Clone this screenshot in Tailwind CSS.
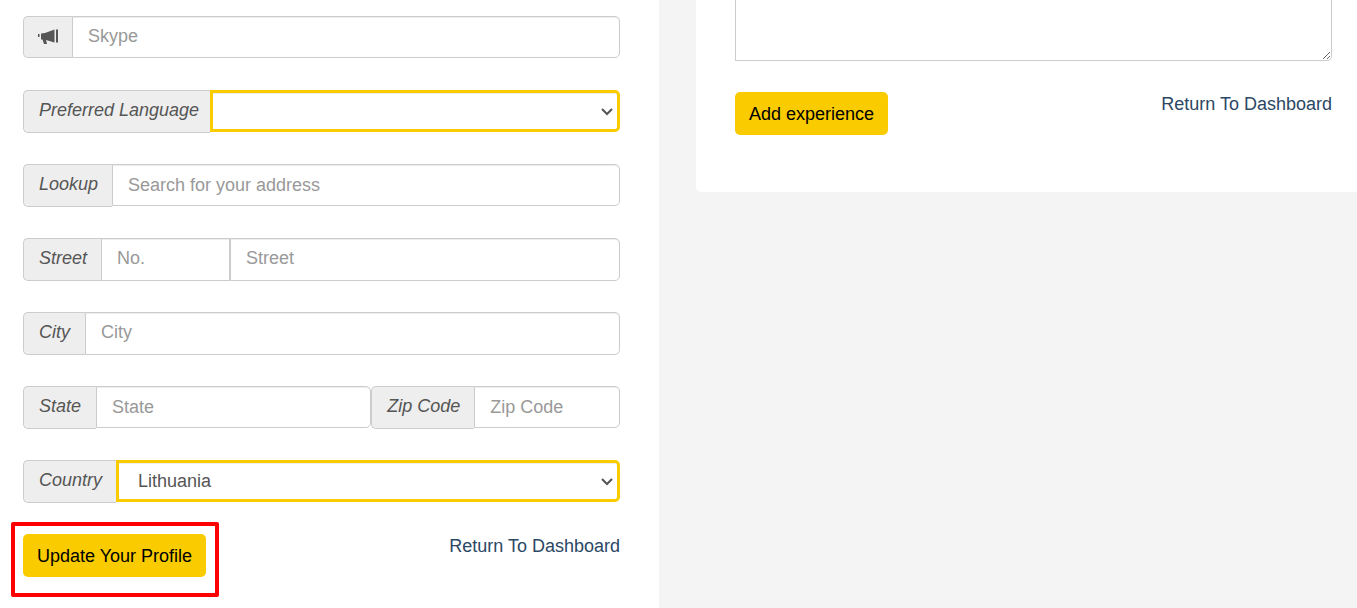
<!DOCTYPE html>
<html lang="en">
<head>
    <meta charset="UTF-8">
    <meta name="viewport" content="width=device-width, initial-scale=1.0">
    <title>Edit Profile</title>
    <script src="https://cdn.jsdelivr.net/npm/@tailwindcss/browser@4"></script>
</head>
<body class="min-h-screen bg-[#f4f4f4] font-['Liberation_Sans',Arial,sans-serif] text-[18px] leading-6 text-[#555]">
    <div class="grid min-h-screen grid-cols-[659fr_661fr] gap-[37px]">
        <!-- Profile form -->
        <form class="flex flex-col gap-[31px] bg-white pt-4 pr-[39px] pl-[23px]">
            <div class="flex h-[43px] items-start">
                <label for="skype" class="flex h-[42px] w-[49px] shrink-0 items-center justify-center rounded-l-[5px] border border-r-0 border-[#ccc] bg-[#eee]">
                    <svg class="h-[18px] w-[20px]" viewBox="0 0 20 18" fill="#555" role="img" aria-label="Skype">
                        <path d="M0 6h1.500v3H0zM3 5.500 7 5l9.500-3.500v13L8 12l1 4H6l-1.500-4.500H3zM18 1.500h2v13h-2z"/>
                    </svg>
                </label>
                <input id="skype" type="text" placeholder="Skype" class="h-[42px] min-w-0 flex-1 rounded-r-[5px] border border-[#ccc] bg-white px-[15px] pb-0.5 shadow-[inset_0_1px_1px_rgba(0,0,0,0.075)] placeholder:text-[#999]">
            </div>

            <div class="flex h-[43px] items-start">
                <label for="language" class="h-[43px] w-[187px] shrink-0 rounded-l-[5px] border border-r-0 border-[#ccc] bg-[#eee] pt-[7px] pl-[15px] whitespace-nowrap italic">Preferred Language</label>
                <div class="relative min-w-0 flex-1">
                    <select id="language" class="block h-[42px] w-full appearance-none rounded-r-[5px] border-3 border-[#facc00] bg-white px-[19px] shadow-[inset_0_1px_1px_rgba(0,0,0,0.075)]">
                        <option></option>
                        <option>English</option>
                        <option>Lithuanian</option>
                    </select>
                    <svg class="pointer-events-none absolute top-[18px] right-[7px] h-2 w-3" viewBox="0 0 12 8" fill="none" stroke="#555" stroke-width="2"><path d="M1 1l5 5 5-5"/></svg>
                </div>
            </div>

            <div class="flex h-[43px] items-start">
                <label for="lookup" class="h-[43px] w-[89px] shrink-0 rounded-l-[5px] border border-r-0 border-[#ccc] bg-[#eee] pt-[7px] pl-[15px] italic">Lookup</label>
                <input id="lookup" type="text" placeholder="Search for your address" class="h-[42px] min-w-0 flex-1 rounded-r-[5px] border border-[#ccc] bg-white px-[15px] shadow-[inset_0_1px_1px_rgba(0,0,0,0.075)] placeholder:text-[#999]">
            </div>

            <div class="flex h-[43px] items-start">
                <label for="street" class="h-[43px] w-[78px] shrink-0 rounded-l-[5px] border border-r-0 border-[#ccc] bg-[#eee] pt-[7px] pl-[15px] italic">Street</label>
                <input type="text" aria-label="Street number" placeholder="No." class="h-[43px] w-[129px] shrink-0 border border-[#ccc] bg-white px-[15px] pb-0.5 shadow-[inset_0_1px_1px_rgba(0,0,0,0.075)] placeholder:text-[#999]">
                <input id="street" type="text" placeholder="Street" class="h-[43px] min-w-0 flex-1 rounded-r-[5px] border border-[#ccc] bg-white px-[15px] pb-0.5 shadow-[inset_0_1px_1px_rgba(0,0,0,0.075)] placeholder:text-[#999]">
            </div>

            <div class="flex h-[43px] items-start">
                <label for="city" class="h-[43px] w-[62px] shrink-0 rounded-l-[5px] border border-r-0 border-[#ccc] bg-[#eee] pt-[7px] pl-[15px] italic">City</label>
                <input id="city" type="text" placeholder="City" class="h-[43px] min-w-0 flex-1 rounded-r-[5px] border border-[#ccc] bg-white px-[15px] pb-0.5 shadow-[inset_0_1px_1px_rgba(0,0,0,0.075)] placeholder:text-[#999]">
            </div>

            <div class="grid h-[43px] grid-cols-[7fr_5fr]">
                <div class="flex min-w-0 items-start">
                    <label for="state" class="h-[43px] w-[73px] shrink-0 rounded-l-[5px] border border-r-0 border-[#ccc] bg-[#eee] pt-[7px] pl-[15px] italic">State</label>
                    <input id="state" type="text" placeholder="State" class="h-[42px] min-w-0 flex-1 rounded-r-[5px] border border-[#ccc] bg-white px-[15px] shadow-[inset_0_1px_1px_rgba(0,0,0,0.075)] placeholder:text-[#999]">
                </div>
                <div class="flex min-w-0 items-start">
                    <label for="zip" class="h-[43px] w-[103px] shrink-0 rounded-l-[5px] border border-r-0 border-[#ccc] bg-[#eee] pt-[7px] pl-[15px] whitespace-nowrap italic">Zip Code</label>
                    <input id="zip" type="text" placeholder="Zip Code" class="h-[42px] min-w-0 flex-1 rounded-r-[5px] border border-[#ccc] bg-white px-[15px] shadow-[inset_0_1px_1px_rgba(0,0,0,0.075)] placeholder:text-[#999]">
                </div>
            </div>

            <div class="flex h-[43px] items-start">
                <label for="country" class="h-[43px] w-[93px] shrink-0 rounded-l-[5px] border border-r-0 border-[#ccc] bg-[#eee] pt-[7px] pl-[15px] italic">Country</label>
                <div class="relative min-w-0 flex-1">
                    <select id="country" class="block h-[42px] w-full appearance-none rounded-r-[5px] border-3 border-[#facc00] bg-white px-[19px] shadow-[inset_0_1px_1px_rgba(0,0,0,0.075)]">
                        <option>Lithuania</option>
                        <option>Latvia</option>
                        <option>Estonia</option>
                    </select>
                    <svg class="pointer-events-none absolute top-[18px] right-[7px] h-2 w-3" viewBox="0 0 12 8" fill="none" stroke="#555" stroke-width="2"><path d="M1 1l5 5 5-5"/></svg>
                </div>
            </div>

            <div class="flex items-start justify-between">
                <div class="relative">
                    <button type="submit" class="h-[43px] rounded-[5px] bg-[#facc00] px-[14px] text-black">Update Your Profile</button>
                    <div class="pointer-events-none absolute -top-3 -right-[13px] -bottom-5 -left-3 rounded-xs border-4 border-[#f00]"></div>
                </div>
                <a href="#" class="text-[#2b4864]">Return To Dashboard</a>
            </div>
        </form>

        <!-- Experience form -->
        <form class="self-start rounded-bl-[5px] bg-white pr-[25px] pb-[57px] pl-[39px]">
            <textarea aria-label="Experience" class="block h-[61px] w-full rounded-br-[5px] border border-t-0 border-[#ccc] bg-white px-[15px]"></textarea>
            <div class="mt-[31px] flex items-start justify-between">
                <button type="submit" class="h-[43px] rounded-[5px] bg-[#facc00] px-[14px] text-black">Add experience</button>
                <a href="#" class="text-[#2b4864]">Return To Dashboard</a>
            </div>
        </form>
    </div>
</body>
</html>
